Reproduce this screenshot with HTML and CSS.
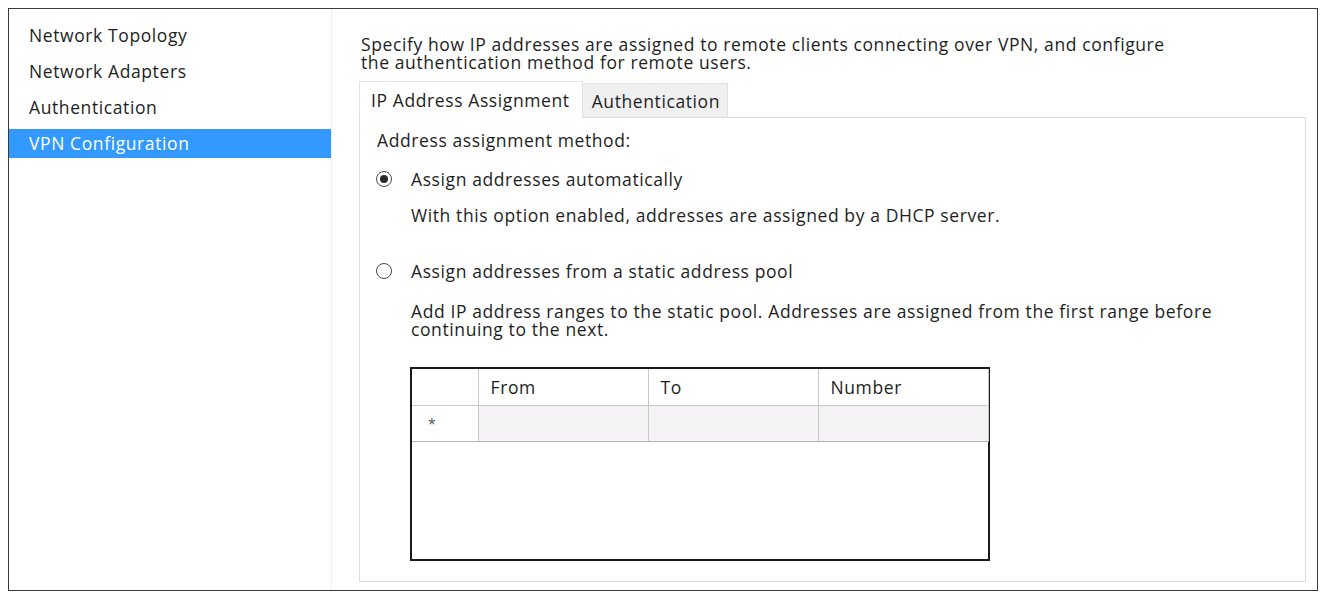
FILE: index.html
```html
<!DOCTYPE html>
<html lang="en">

<head>
    <meta charset="UTF-8">
    <meta name="viewport" content="width=device-width, initial-scale=1.0">
    <title>VPN Configuration</title>
    <link rel="stylesheet" href="styles.css">
</head>

<body>
    <div class="frame">
        <ul class="nav">
            <li>Network Topology</li>
            <li>Network Adapters</li>
            <li>Authentication</li>
            <li class="selected">VPN Configuration</li>
        </ul>

        <div class="main">
            <p class="intro">Specify how IP addresses are assigned to remote clients connecting over VPN, and configure<br>the authentication method for remote users.</p>

            <div class="tabs">
                <div class="tab active">IP Address Assignment</div>
                <div class="tab">Authentication</div>
            </div>

            <div class="panel">
                <p class="label">Address assignment method:</p>

                <label class="option">
                    <span class="radio checked"></span>
                    Assign addresses automatically
                </label>
                <p class="hint">With this option enabled, addresses are assigned by a DHCP server.</p>

                <label class="option second">
                    <span class="radio"></span>
                    Assign addresses from a static address pool
                </label>
                <p class="hint second">Add IP address ranges to the static pool. Addresses are assigned from the first range before<br>continuing to the next.</p>

                <div class="grid">
                    <table>
                        <colgroup>
                            <col class="c-head">
                            <col class="c-data">
                            <col class="c-data">
                            <col class="c-data">
                        </colgroup>
                        <tr class="head">
                            <th class="rowhead"></th>
                            <th>From</th>
                            <th>To</th>
                            <th>Number</th>
                        </tr>
                        <tr class="new">
                            <td class="rowhead">*</td>
                            <td></td>
                            <td></td>
                            <td></td>
                        </tr>
                    </table>
                </div>
            </div>
        </div>
    </div>
</body>

</html>
```

FILE: styles.css
```css
body {
    font-family: "Open Sans", "Noto Sans", sans-serif;
    font-size: 17.5px;
    letter-spacing: 0.6px;
    color: #1e1e1e;
    background-color: #fff;
    margin: 0;
    padding: 8px;
}

.frame {
    display: flex;
    height: 581px;
    border: 1px solid #3a3a3a;
}

.nav {
    list-style: none;
    width: 322px;
    margin: 0;
    padding: 12px 0 0 0;
    border-right: 1px solid #efefef;
}

.nav li {
    height: 29px;
    line-height: 29px;
    padding-left: 20px;
    margin-bottom: 7px;
}

.nav li.selected {
    background-color: #3399ff;
    color: #fff;
}

.main {
    flex: 1;
    padding: 0 11px 0 27px;
    display: flex;
    flex-direction: column;
}

.intro {
    margin: 26px 0 0 2px;
    line-height: 18px;
}

.tabs {
    display: flex;
    align-items: flex-end;
    margin-top: 11px;
    height: 35px;
}

.tab {
    height: 33px;
    line-height: 35px;
    padding: 0 7px 0 9px;
    background-color: #f0f0f0;
    border: 1px solid #e3e3e3;
    border-bottom: none;
    border-left: none;
}

.tab.active {
    height: 36px;
    line-height: 37px;
    padding: 0 12px 0 11px;
    background-color: #fff;
    border-left: 1px solid #e3e3e3;
    margin-bottom: -1px;
    position: relative;
    z-index: 1;
}

.panel {
    flex: 1;
    margin-bottom: 8px;
    border: 1px solid #dcdcdc;
    padding: 12px 17px 0 17px;
}

.panel p {
    margin: 0;
}

.label {
    line-height: 20px;
}

.option {
    display: flex;
    align-items: center;
    gap: 19px;
    margin-top: 19px;
    line-height: 20px;
}

.option.second {
    margin-top: 37px;
}

.radio {
    width: 16px;
    height: 16px;
    border: 1px solid #4a4a4a;
    border-radius: 50%;
    box-sizing: border-box;
    display: inline-block;
    position: relative;
    margin-left: -1px;
}

.radio.checked::after {
    content: "";
    position: absolute;
    left: 3px;
    top: 3px;
    width: 8px;
    height: 8px;
    border-radius: 50%;
    background-color: #2a2a2a;
}

.panel .hint {
    margin: 17px 0 0 34px;
    line-height: 18px;
}

.panel .hint.second {
    margin-top: 21px;
}

.grid {
    margin: 29px 0 0 33px;
    width: 576px;
    height: 190px;
    border: 2px solid #1a1a1a;
}

table {
    border-collapse: collapse;
    table-layout: fixed;
    width: 576px;
}

.c-head {
    width: 66px;
}

.c-data {
    width: 170px;
}

th,
td {
    font-weight: normal;
    text-align: left;
    padding: 0 0 0 12px;
    border-right: 1px solid #c8c8c8;
}

th {
    height: 36px;
    border-bottom: 1px solid #c8c8c8;
}

td {
    height: 35px;
    background-color: #f5f2f5;
    border-bottom: 1px solid #b4b4b4;
}

td.rowhead {
    background-color: #fff;
    color: #555;
    font-size: 14px;
    padding-left: 16px;
}
```
